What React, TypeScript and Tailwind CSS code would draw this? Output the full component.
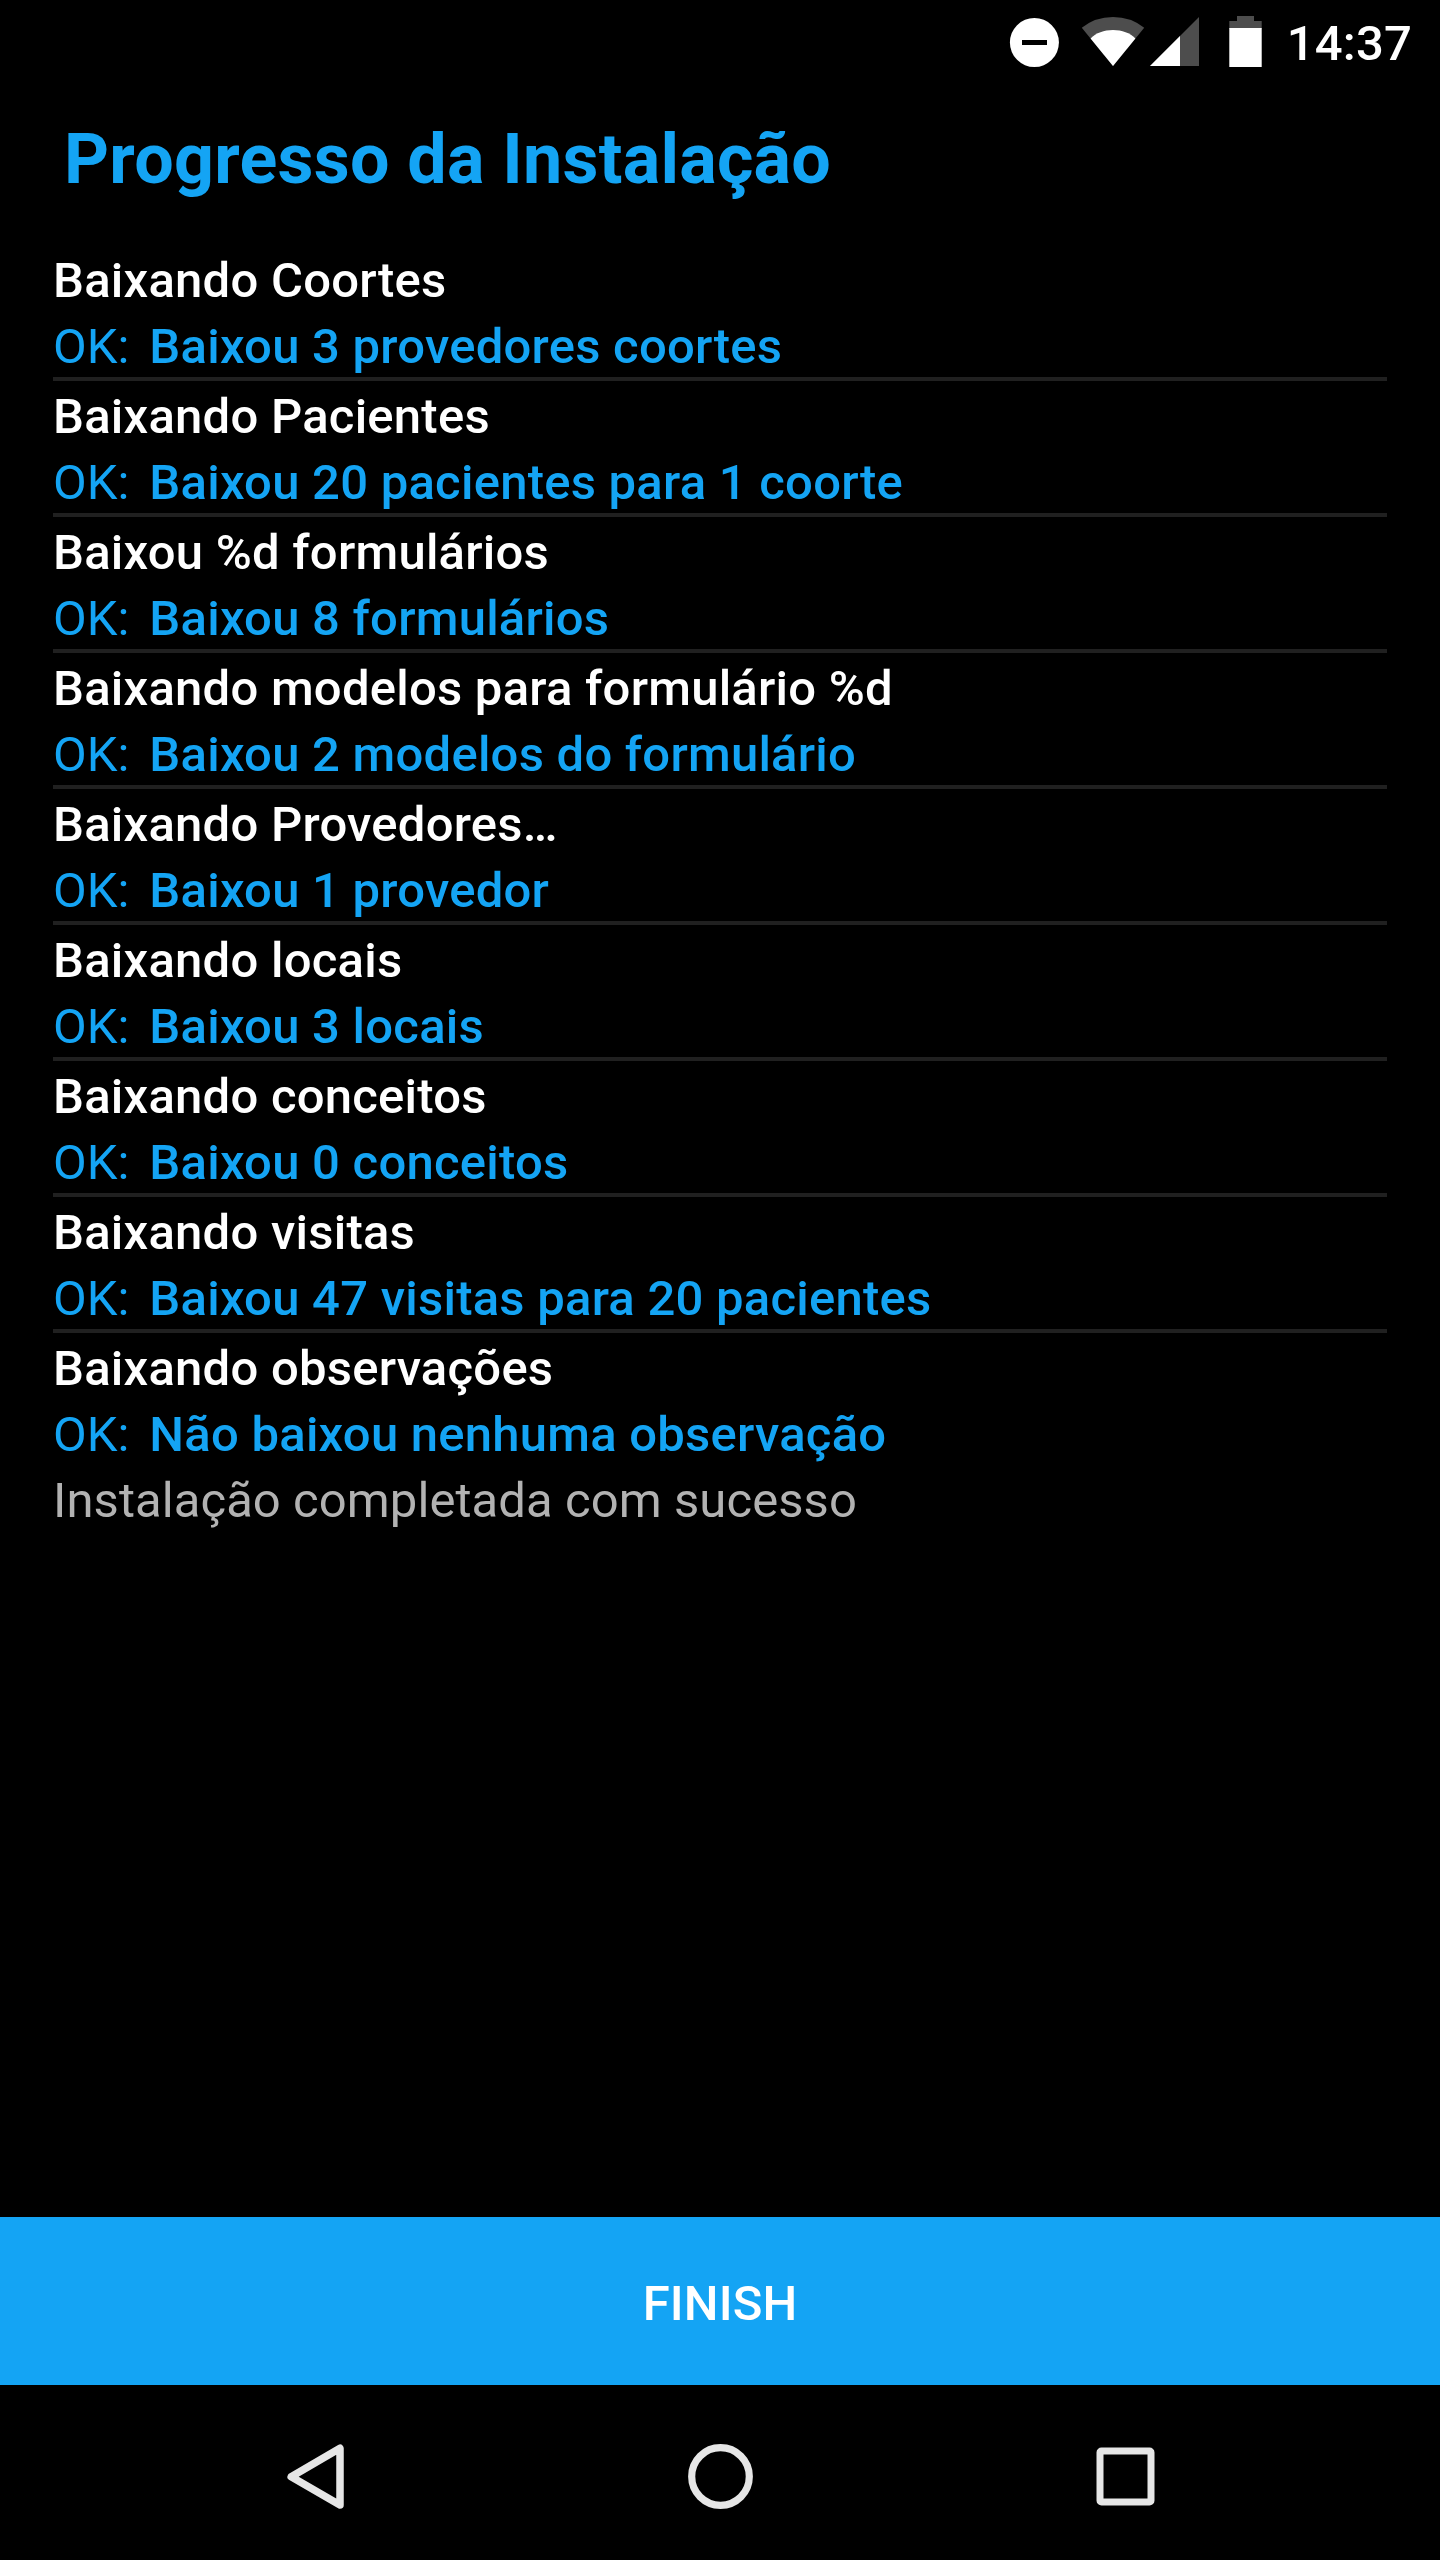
interface EtapaInstalacao {
  titulo: string;
  resultado: string;
}

const etapas: EtapaInstalacao[] = [
  { titulo: "Baixando Coortes", resultado: "Baixou 3 provedores coortes" },
  { titulo: "Baixando Pacientes", resultado: "Baixou 20 pacientes para 1 coorte" },
  { titulo: "Baixou %d formulários", resultado: "Baixou 8 formulários" },
  { titulo: "Baixando modelos para formulário %d", resultado: "Baixou 2 modelos do formulário" },
  { titulo: "Baixando Provedores…", resultado: "Baixou 1 provedor" },
  { titulo: "Baixando locais", resultado: "Baixou 3 locais" },
  { titulo: "Baixando conceitos", resultado: "Baixou 0 conceitos" },
  { titulo: "Baixando visitas", resultado: "Baixou 47 visitas para 20 pacientes" },
  { titulo: "Baixando observações", resultado: "Não baixou nenhuma observação" },
];

function BarraDeStatus() {
  return (
    <header className="flex h-[84px] items-start justify-end pr-[28px] text-white">
      {/* Não perturbe */}
      <svg className="mt-[14px] mr-[19px] h-[56px] w-[56px] shrink-0" viewBox="0 0 56 56">
        <circle cx="28.4" cy="28.5" r="24.5" fill="#fff" />
        <rect x="16" y="26" width="25" height="5" fill="#000" />
      </svg>

      {/* Wi-Fi */}
      <svg className="mt-[14px] mr-[5px] h-[56px] w-[64px] shrink-0" viewBox="0 0 64 56">
        <path d="M32 52 L0.8 13.8 Q14 3 32 3 T63.2 13.8 Z" fill="#4d4d4d" />
        <path d="M32 52 L9.6 24.4 C15 19 23 16 32 16 S49 19 54.4 24.4 Z" fill="#fff" />
      </svg>

      {/* Sinal */}
      <svg className="mt-[14px] mr-[23px] h-[56px] w-[56px] shrink-0" viewBox="0 0 56 56">
        <path d="M0 52 L49 3 V52 Z" fill="#4d4d4d" />
        <path d="M0 52 L30 22 V52 Z" fill="#fff" />
      </svg>

      {/* Bateria */}
      <svg className="mt-[14px] mr-[24px] h-[56px] w-[34px] shrink-0" viewBox="0 0 34 56">
        <path d="M8 2 H25 V7 H32.7 V15 H0.3 V7 H8 Z" fill="#4d4d4d" />
        <rect x="0.3" y="14" width="32.4" height="39" fill="#fff" />
      </svg>

      <span className="flex w-[125px] justify-end text-[49px] leading-[88px] font-medium tracking-[0.2px]">
        14:37
      </span>
    </header>
  );
}

function BarraDeNavegacao() {
  return (
    <nav className="flex h-[168px] items-center justify-center">
      <button type="button" aria-label="Voltar" className="flex w-[405px] justify-center">
        <svg className="h-[84px] w-[84px]" viewBox="0 0 84 84" fill="none" stroke="#e6e6e6" strokeWidth="7.5" strokeLinejoin="round">
          <path d="M67 14.3 V71 L18.2 42.8 Z" />
        </svg>
      </button>
      <button type="button" aria-label="Início" className="flex w-[405px] justify-center">
        <svg className="h-[84px] w-[84px]" viewBox="0 0 84 84" fill="none" stroke="#e6e6e6" strokeWidth="7.2">
          <circle cx="42.5" cy="42.5" r="28.8" />
        </svg>
      </button>
      <button type="button" aria-label="Recentes" className="flex w-[405px] justify-center">
        <svg className="h-[84px] w-[84px]" viewBox="0 0 84 84" fill="none" stroke="#e6e6e6" strokeWidth="7">
          <rect x="17" y="17" width="51" height="51" rx="1.5" />
        </svg>
      </button>
    </nav>
  );
}

export default function App() {
  return (
    <div className="flex h-[2560px] w-[1440px] flex-col bg-black font-['Roboto',sans-serif]">
      <BarraDeStatus />

      {/* TÍTULO */}
      <h1 className="mt-[33px] ml-[64px] text-[70px] leading-[84px] font-bold tracking-[0.25px] text-[#14a4f4]">
        Progresso da Instalação
      </h1>

      {/* ETAPAS */}
      <main className="mt-[44px] flex-1 px-[53px] text-[49px] leading-[66px]">
        <ul>
          {etapas.map((etapa) => (
            <li
              key={etapa.titulo}
              className="border-b-4 border-[#202020] pt-[3px] last:border-b-0"
            >
              <p className="font-medium tracking-[0.24px] text-white">{etapa.titulo}</p>
              <p className="flex h-[63px] text-[#14a4f4]">
                <span className="mr-[20px]">OK:</span>
                <span className="font-medium tracking-[0.24px]">{etapa.resultado}</span>
              </p>
            </li>
          ))}
        </ul>
        <p className="pt-[3px] tracking-[0.07px] text-[#b2b2b2]">Instalação completada com sucesso</p>
      </main>

      {/* BOTÃO */}
      <button
        type="button"
        className="mb-[7px] h-[168px] bg-[#14a4f4] pt-[6px] text-[49px] leading-[66px] font-medium tracking-[0.1px] text-white"
      >
        FINISH
      </button>

      <BarraDeNavegacao />
    </div>
  );
}
